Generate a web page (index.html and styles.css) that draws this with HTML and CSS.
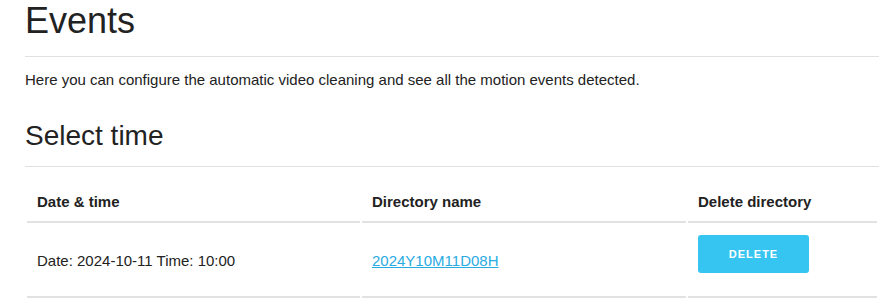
FILE: index.html
```html
<!DOCTYPE html>
<html lang="en">
<head>
  <meta charset="UTF-8">
  <meta name="viewport" content="width=device-width, initial-scale=1.0">
  <title>Events</title>
  <link rel="stylesheet" href="styles.css">
</head>
<body>
  <div class="page">
    <h1 class="title">Events</h1>
    <p class="intro">Here you can configure the automatic video cleaning and see all the motion events detected.</p>

    <h2 class="section-title">Select time</h2>

    <table class="events">
      <colgroup>
        <col class="col-date">
        <col class="col-dir">
        <col>
      </colgroup>
      <thead>
        <tr>
          <th>Date &amp; time</th>
          <th>Directory name</th>
          <th>Delete directory</th>
        </tr>
      </thead>
      <tbody>
        <tr>
          <td>Date: 2024-10-11 Time: 10:00</td>
          <td><a href="#" class="dir-link">2024Y10M11D08H</a></td>
          <td class="action"><button class="delete-btn">DELETE</button></td>
        </tr>
      </tbody>
    </table>
  </div>
</body>
</html>
```

FILE: styles.css
```css
body {
  margin: 0;
  font-family: "Liberation Sans", Arial, sans-serif;
  color: #222;
  background: #fff;
  overflow: hidden;
}

.page {
  padding-left: 25px;
}

.title {
  margin: 0;
  font-size: 36px;
  font-weight: normal;
  line-height: 41px;
  padding-bottom: 15px;
  border-bottom: 1px solid #e0e0e0;
}

.intro {
  margin: 14px 0 0;
  font-size: 15px;
  line-height: 17px;
}

.section-title {
  margin: 32px 0 0;
  font-size: 28px;
  font-weight: normal;
  line-height: 32px;
  padding-bottom: 14px;
  border-bottom: 1px solid #e0e0e0;
}

.events {
  width: 854px;
  margin-top: 11px;
  table-layout: fixed;
  border-collapse: separate;
  border-spacing: 2px 2px;
}

.col-date {
  width: 333px;
}

.col-dir {
  width: 324px;
}

.events th {
  text-align: left;
  font-size: 15px;
  font-weight: bold;
  line-height: 17px;
  padding: 13px 10px 11px;
  border-bottom: 2px solid #e2e2e2;
}

.events td {
  font-size: 15px;
  line-height: 17px;
  padding: 10px 10px;
  vertical-align: middle;
  border-bottom: 2px solid #e2e2e2;
}

.events td.action {
  padding: 10px 10px 23px;
}

.dir-link {
  color: #29abe2;
}

.delete-btn {
  display: block;
  width: 111px;
  height: 38px;
  border: none;
  border-radius: 3px;
  background: #36c4f0;
  color: #fff;
  font-family: "Liberation Sans", Arial, sans-serif;
  font-size: 11px;
  font-weight: bold;
  letter-spacing: 1px;
  cursor: pointer;
}
```
